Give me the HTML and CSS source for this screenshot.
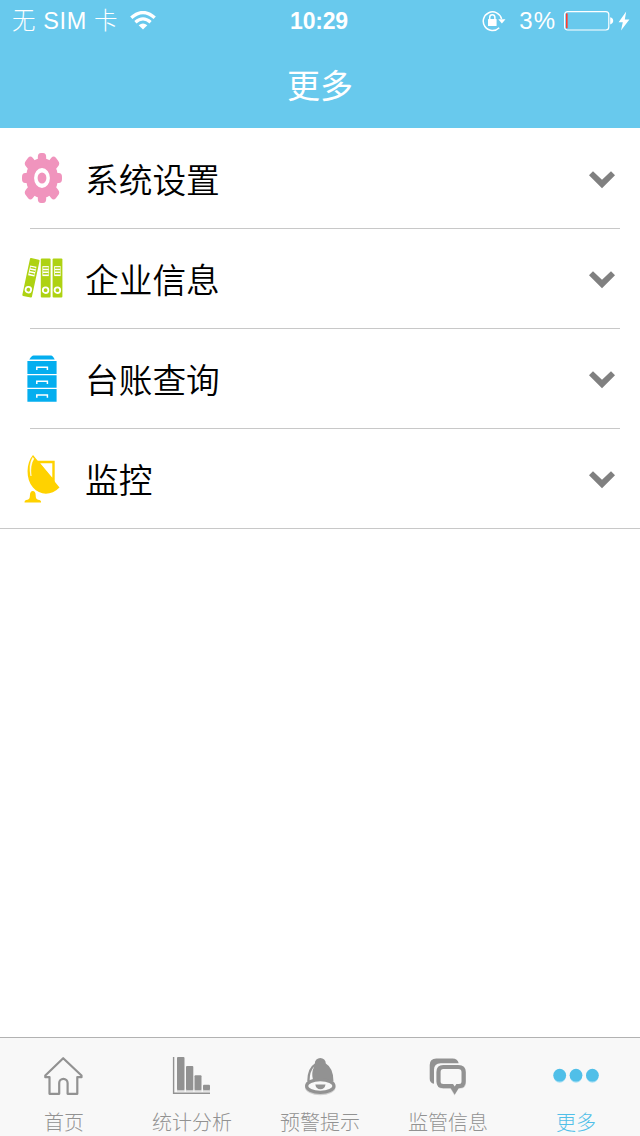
FILE: index.html
```html
<!DOCTYPE html>
<html lang="zh-CN">

<head>
    <meta charset="UTF-8">
    <meta name="viewport" content="width=device-width, initial-scale=1.0">
    <title>更多</title>
    <link rel="stylesheet" href="styles.css">
</head>

<body>

    <header class="header">
        <div class="status">
            <div class="status-left">
                <span class="carrier">无 SIM 卡</span>
                <svg class="wifi" width="26" height="20" viewBox="0 0 26 20">
                    <path d="M1.3 6.8 Q13 -3.6 24.7 6.8" fill="none" stroke="#fff" stroke-width="3.4" />
                    <path d="M5.4 11.2 Q13 4.6 20.6 11.2" fill="none" stroke="#fff" stroke-width="3.2" />
                    <path d="M8.7 14.2 Q13 10.6 17.3 14.2 L13 18.6Z" fill="#fff" />
                </svg>
            </div>
            <div class="time">10:29</div>
            <div class="status-right">
                <svg class="lock" width="24" height="22" viewBox="0 0 24 22">
                    <path d="M17.2 17.7 A9.3 9.3 0 1 1 19.6 9" fill="none" stroke="#fff" stroke-width="1.5" />
                    <path d="M16.3 9.2h7.2l-3.6 4.2z" fill="#fff" />
                    <rect x="6" y="9" width="8.6" height="7" rx=".6" fill="#fff" />
                    <path d="M7.7 9.5V7.4a2.6 2.6 0 0 1 5.2 0v2.1" fill="none" stroke="#fff" stroke-width="1.5" />
                </svg>
                <span class="percent">3%</span>
                <svg class="battery" width="50" height="20" viewBox="0 0 50 20">
                    <rect x=".6" y=".6" width="44.2" height="18.4" rx="3" fill="none" stroke="#fff" stroke-width="1.2" />
                    <rect x="2" y="2.4" width="1.6" height="14.8" fill="#ff3b30" />
                    <path d="M46.2 6.2q3 .7 3 3.6t-3 3.6z" fill="#fff" />
                </svg>
                <svg class="bolt" width="12" height="20" viewBox="0 0 12 20">
                    <path d="M8.2 .5L.6 11.2h4.2L3 19.5 11.4 8.4H6.8z" fill="#fff" />
                </svg>
            </div>
        </div>
        <h1 class="title">更多</h1>
    </header>

    <main class="list">
        <div class="row">
            <div class="row-in">
                <svg class="icon" width="44" height="52" viewBox="20 152 44 52">
                    <g fill="#f094bd" transform="translate(42 178) scale(.8 1)">
                        <circle r="20" />
                        <rect x="-5.2" y="-25" width="10.4" height="50" rx="4" />
                        <rect x="-6" y="-26.5" width="12" height="53" rx="4" transform="rotate(45)" />
                        <rect x="-5" y="-25" width="10" height="50" rx="4" transform="rotate(90)" />
                        <rect x="-6" y="-26.5" width="12" height="53" rx="4" transform="rotate(135)" />
                        <circle r="7.7" stroke="#fff" stroke-width="4.4" />
                    </g>
                </svg>
                <span class="name">系统设置</span>
                <svg class="chevron" width="26" height="18" viewBox="0 0 26 18">
                    <path d="M0 4.2L4 .2l9 8.6 9-8.6 4 4-13 13z" fill="#808080" />
                </svg>
            </div>
        </div>
        <div class="row">
            <div class="row-in">
                <svg class="icon" width="44" height="52" viewBox="20 252 44 52">
                    <defs>
                        <g id="binder">
                            <rect width="9.8" height="38.8" rx="1" fill="#aed212" />
                            <path d="M1.6 7.5h6.4v10H1.6z" fill="#fff" />
                            <path d="M2.4 9.4h5.2M2.4 12.3h5.2M2.4 15.2h5.2" stroke="#aed212" stroke-width="1.4" />
                            <circle cx="4.8" cy="31.6" r="2.8" fill="#aed212" stroke="#fff" stroke-width="1.8" />
                        </g>
                    </defs>
                    <use href="#binder" transform="translate(30.2 257.8) rotate(12)" />
                    <use href="#binder" x="40.8" y="258.6" />
                    <use href="#binder" x="52.6" y="258.6" />
                </svg>
                <span class="name">企业信息</span>
                <svg class="chevron" width="26" height="18" viewBox="0 0 26 18">
                    <path d="M0 4.2L4 .2l9 8.6 9-8.6 4 4-13 13z" fill="#808080" />
                </svg>
            </div>
        </div>
        <div class="row">
            <div class="row-in">
                <svg class="icon" width="44" height="52" viewBox="20 352 44 52">
                    <g fill="#04aeef">
                        <path d="M33.5 355.6h17.6q1.6 0 3.6 4H29.3q2.4-4 4.2-4z" />
                        <path d="M27.4 361h29.2v13H27.4zM27.4 375.2h29.2v12.6H27.4zM27.4 389h29.2v12.8H27.4z" />
                    </g>
                    <path d="M36.8 370v-2.7h10.6v2.7M36.8 384v-2.7h10.6v2.7M36.8 397.8v-2.7h10.6v2.7" fill="none" stroke="#fff" stroke-width="1.5" />
                </svg>
                <span class="name">台账查询</span>
                <svg class="chevron" width="26" height="18" viewBox="0 0 26 18">
                    <path d="M0 4.2L4 .2l9 8.6 9-8.6 4 4-13 13z" fill="#808080" />
                </svg>
            </div>
        </div>
        <div class="row last">
            <div class="row-in">
                <svg class="icon" width="44" height="52" viewBox="20 452 44 52">
                    <path d="M36 462h17.5v19L38 462.5" fill="none" stroke="#ffd200" stroke-width="2.4" />
                    <path d="M33 455C26 463 25.5 479 33 487.5C40 495.5 51 496 59.5 487.5z" fill="#ffd200" />
                    <path d="M32.8 457.5Q28.4 465 31 476Q29.8 465 33.8 458.8z" fill="#fff" stroke="#fff" stroke-width=".6" />
                    <path d="M24.5 502.5q0-2.5 3-2.7 2.4-.5 2.4-4.3 .1-4.5 2.9-4.5t2.9 4.5q0 3.8 2.4 4.3 3 .2 3 2.7z" fill="#ffd200" />
                </svg>
                <span class="name">监控</span>
                <svg class="chevron" width="26" height="18" viewBox="0 0 26 18">
                    <path d="M0 4.2L4 .2l9 8.6 9-8.6 4 4-13 13z" fill="#808080" />
                </svg>
            </div>
        </div>
    </main>

    <nav class="tabs">
        <div class="tab">
            <svg width="44" height="44" viewBox="42 1054 44 44">
                <path d="M63.2 1058.2L45.3 1075.5v1.7h4.2v16.6h9.7v-10.8a4.2 4.2 0 0 1 8.4 0v10.8h9.7v-16.6h4.2v-1.7z" fill="none" stroke="#929292" stroke-width="2.2" stroke-linejoin="round" />
            </svg>
            <span>首页</span>
        </div>
        <div class="tab">
            <svg width="44" height="44" viewBox="170 1054 44 44">
                <path d="M173.6 1057v36.2H210" fill="none" stroke="#929292" stroke-width="1.4" />
                <path d="M177 1089h7.5v2.5H177zM186 1089h7.3v2.5H186zM194.5 1089h7v2.5h-7zM203 1089h7v2.5h-7z" fill="#d0d0d0" />
                <g fill="#929292">
                    <rect x="177" y="1057" width="7.5" height="33" rx="1" />
                    <rect x="186" y="1066" width="7.3" height="24" rx="1" />
                    <rect x="194.5" y="1075.2" width="7" height="14.8" rx="1" />
                    <rect x="203" y="1084.8" width="7" height="5.2" rx="1" />
                </g>
            </svg>
            <span>统计分析</span>
        </div>
        <div class="tab">
            <svg width="44" height="44" viewBox="298 1054 44 44">
                <ellipse cx="320.3" cy="1087.8" rx="15.2" ry="7.4" fill="#d0d0d0" />
                <path d="M314.8 1063.5a5.5 5.5 0 1 1 11 0q7.7 4.5 7.7 18H307.2q0-13.5 7.6-18z" fill="#929292" />
                <path d="M314.2 1066.5q-4.6 5-4.6 14.2l3.4-.8q-2-7 1.2-13.4z" fill="#f8f8f8" />
                <ellipse cx="320.3" cy="1086" rx="13.7" ry="6.3" fill="#f8f8f8" stroke="#929292" stroke-width="3.2" />
                <path d="M315.3 1084.5h10.2q-.8 4.8-5.1 4.8t-5.1-4.8z" fill="#929292" />
            </svg>
            <span>预警提示</span>
        </div>
        <div class="tab">
            <svg width="44" height="44" viewBox="426 1054 44 44">
                <path d="M429.7 1065q0-6.6 6.6-6.6h16.2q5.2 0 6.2 4.8h-18q-6.7 0-6.7 6.6v14q-4.3-.8-4.3-5z" fill="#929292" />
                <path d="M443.5 1067.5h15.500q5 0 5 5v10q0 4-4 4h-2.500l-3 5-3-5h-8.500q-4 0-4-4v-10q0-5 4.500-5z" fill="none" stroke="#d0d0d0" stroke-width="4" />
                <path d="M443.3 1067h15q5.3 0 5.3 5v9.500q0 4.600-4.600 4.600h-1.500l-2.800 4.400-2.800-4.400h-8.600q-4.800 0-4.800-4.600v-9.500q0-5 4.800-5z" fill="#f8f8f8" stroke="#929292" stroke-width="4.2" />
            </svg>
            <span>监管信息</span>
        </div>
        <div class="tab active">
            <svg width="48" height="44" viewBox="552 1054 48 44">
                <g fill="#a9e0f5">
                    <circle cx="559.7" cy="1076.8" r="6" />
                    <circle cx="576" cy="1076.8" r="6" />
                    <circle cx="592.4" cy="1076.8" r="6" />
                </g>
                <g fill="#50bfe8">
                    <circle cx="559.7" cy="1075.2" r="6.4" />
                    <circle cx="576" cy="1075.2" r="6.4" />
                    <circle cx="592.4" cy="1075.2" r="6.4" />
                </g>
            </svg>
            <span>更多</span>
        </div>
    </nav>

</body>

</html>
```
FILE: styles.css
```css
* {
    margin: 0;
    padding: 0;
    box-sizing: border-box;
}

body {
    display: flex;
    flex-direction: column;
    width: 640px;
    height: 1136px;
    overflow: hidden;
    background: #fff;
    font-family: "Liberation Sans", "Noto Sans CJK SC", sans-serif;
}

svg {
    display: block;
    flex: none;
}

/* top bar */
.header {
    height: 128px;
    background: #68c9ed;
    color: #fff;
}

.status {
    display: grid;
    grid-template-columns: 1fr 80px 1fr;
    align-items: center;
    height: 42px;
    line-height: 40px;
    white-space: nowrap;
}

.status-left,
.status-right {
    display: flex;
    align-items: center;
}

.status-left {
    padding-left: 12px;
    gap: 12px;
}

.status-right {
    justify-content: flex-end;
    padding-right: 10px;
}

.carrier {
    font-size: 23.5px;
    font-weight: 300;
    letter-spacing: 0.6px;
}

.time {
    text-align: center;
    font-size: 23px;
    font-weight: bold;
    letter-spacing: -0.2px;
    padding-right: 2px;
}

.percent {
    margin: 0 8px 0 13px;
    font-size: 24px;
    letter-spacing: 1px;
}

.bolt {
    margin-left: 4px;
}

.title {
    height: 86px;
    line-height: 89px;
    text-align: center;
    font-size: 33px;
    font-weight: 400;
}

/* menu */
.list {
    flex: 1;
    padding-top: 1px;
}

.row {
    padding: 0 20px 0 30px;
}

.row-in {
    display: flex;
    align-items: center;
    height: 100px;
    margin-left: -10px;
    padding-right: 5px;
    background: linear-gradient(#c8c8c8, #c8c8c8) 10px 100% / 100% 1px no-repeat;
}

.last {
    height: 100px;
    border-bottom: 1px solid #c8c8c8;
}

.last .row-in {
    background: none;
}

.icon {
    margin-bottom: 2px;
}

.name {
    flex: 1;
    margin-left: 21px;
    padding-top: 4px;
    font-size: 33.7px;
    line-height: 96px;
    font-weight: 350;
    color: #000;
}

.chevron {
    margin-top: 1px;
}

/* bottom tabs */
.tabs {
    display: flex;
    height: 99px;
    border-top: 1px solid #b2b2b2;
    background: #f8f8f8;
}

.tab {
    display: flex;
    flex: 1;
    flex-direction: column;
    align-items: center;
    padding-top: 16px;
    color: #929292;
}

.tab span {
    margin-top: 10px;
    font-size: 20px;
    line-height: 30px;
    font-weight: 300;
}

.active {
    color: #50bfe8;
}
```
